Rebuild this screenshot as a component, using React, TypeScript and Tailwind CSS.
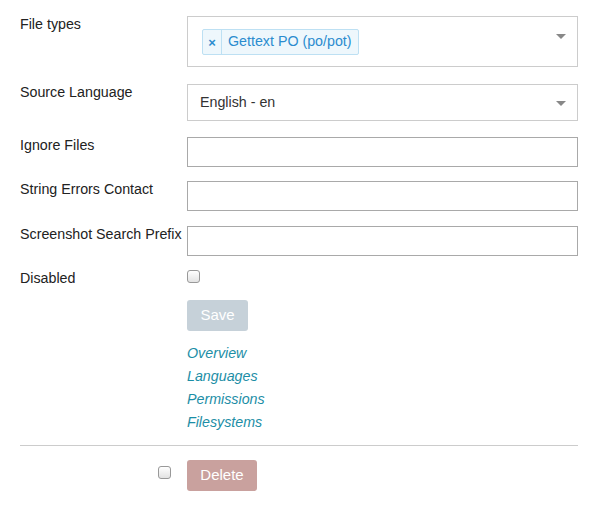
import React from 'react';

const inputCls = 'block h-[30px] w-full border border-[#a9a9a9] bg-white';

function Row({ label, children, className = '' }: { label: string; children: React.ReactNode; className?: string }) {
  return (
    <div className={`flex ${className}`}>
      <label className="w-[167px] shrink-0 -mt-0.5 leading-5 text-[#222]">{label}</label>
      <div className="flex-1">{children}</div>
    </div>
  );
}

function Arrow() {
  return <span className="absolute right-[11px] top-1/2 -mt-[2px] h-0 w-0 border-x-[5px] border-t-[5px] border-x-transparent border-t-[#888]" />;
}

function Checkbox() {
  return <span className="block h-[13px] w-[13px] rounded-[3px] border border-[#999] bg-gradient-to-b from-white to-[#e3e3e3]" />;
}

export default function App() {
  const links = ['Overview', 'Languages', 'Permissions', 'Filesystems'];
  return (
    <div className="ml-5 w-[558px] pt-4 text-[14.25px] font-['Liberation_Sans',Arial,sans-serif]">
      <Row label="File types">
        <div className="relative h-[51px] border border-[#cccccc] bg-white">
          <div className="absolute left-[14px] top-[12px] flex h-[26px] items-center rounded-[2px] border border-[#bde0f3] bg-[#eef7fc] text-[#2b8ccf]">
            <span className="flex h-full w-[19px] items-center justify-center border-r border-[#bde0f3] text-[13px] font-bold leading-none">×</span>
            <span className="px-[6px]">Gettext PO (po/pot)</span>
          </div>
          <span className="absolute right-[11px] top-[17px] h-0 w-0 border-x-[5px] border-t-[5px] border-x-transparent border-t-[#888]" />
        </div>
      </Row>

      <Row label="Source Language" className="mt-[17px]">
        <div className="relative flex h-[37px] items-center border border-[#cccccc] bg-white pl-3 text-[#333]">
          English - en
          <Arrow />
        </div>
      </Row>

      <Row label="Ignore Files" className="mt-[16px]">
        <input className={inputCls} />
      </Row>

      <Row label="String Errors Contact" className="mt-[14px]">
        <input className={inputCls} />
      </Row>

      <Row label="Screenshot Search Prefix" className="mt-[15px]">
        <input className={inputCls} />
      </Row>

      <Row label="Disabled" className="mt-[14px]">
        <Checkbox />
      </Row>

      <div className="ml-[167px] mt-[12px]">
        <button className="h-[31px] w-[61px] rounded-[3px] bg-[#c6d1d9] text-[15px] text-white">Save</button>
        <div className="mt-[11px] flex flex-col">
          {links.map((l) => (
            <a key={l} href="#" className="italic leading-[23px] text-[#1c8ea6]">
              {l}
            </a>
          ))}
        </div>
      </div>

      <hr className="mt-[11px] border-t border-[#cccccc]" />

      <div className="mt-[14px] flex items-start">
        <div className="flex w-[167px] justify-end pr-[16px] pt-[6px]">
          <Checkbox />
        </div>
        <button className="h-[31px] w-[70px] rounded-[3px] bg-[#c9a19e] text-[15px] text-white">Delete</button>
      </div>
    </div>
  );
}
